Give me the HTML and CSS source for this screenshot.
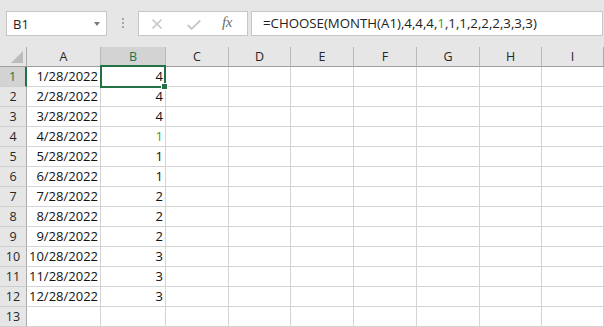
FILE: index.html
```html
<!DOCTYPE html>
<html>
<head>
<meta charset="utf-8">
<link rel="stylesheet" href="styles.css">
</head>
<body>
<div class="app">
  <div class="toolbar">
    <div class="namebox"><span class="nb-text">B1</span><span class="nb-arrow"></span></div>
    <div class="grip"><i></i><i></i><i></i></div>
    <div class="fxbox">
      <svg class="ico-x" width="12" height="10" viewBox="0 0 12 10"><path d="M1.5 0.5 L10.5 9.5 M10.5 0.5 L1.5 9.5" stroke="#c4c4c4" stroke-width="1.5" fill="none"/></svg>
      <svg class="ico-ok" width="14" height="10" viewBox="0 0 14 10"><path d="M0.8 5 L4.6 8.8 L13.2 0.6" stroke="#c4c4c4" stroke-width="1.8" fill="none"/></svg>
      <span class="fx">fx</span>
    </div>
    <div class="formula">=CHOOSE(MONTH(A1),4,4,4,<span class="g">1</span>,1,1,2,2,2,3,3,3)</div>
  </div>
  <div class="sheetwrap">
    <div class="sheet">
      <div class="corner"><span class="tri"></span></div>
      <div class="ch">A</div><div class="ch sel">B</div><div class="ch">C</div><div class="ch">D</div><div class="ch">E</div><div class="ch">F</div><div class="ch">G</div><div class="ch">H</div><div class="ch last">I</div>

      <div class="rh rsel">1</div><div class="c r">1/28/2022</div><div class="c r">4</div><div class="c"></div><div class="c"></div><div class="c"></div><div class="c"></div><div class="c"></div><div class="c"></div><div class="c"></div>
      <div class="rh">2</div><div class="c r">2/28/2022</div><div class="c r">4</div><div class="c"></div><div class="c"></div><div class="c"></div><div class="c"></div><div class="c"></div><div class="c"></div><div class="c"></div>
      <div class="rh">3</div><div class="c r">3/28/2022</div><div class="c r">4</div><div class="c"></div><div class="c"></div><div class="c"></div><div class="c"></div><div class="c"></div><div class="c"></div><div class="c"></div>
      <div class="rh">4</div><div class="c r">4/28/2022</div><div class="c r g">1</div><div class="c"></div><div class="c"></div><div class="c"></div><div class="c"></div><div class="c"></div><div class="c"></div><div class="c"></div>
      <div class="rh">5</div><div class="c r">5/28/2022</div><div class="c r">1</div><div class="c"></div><div class="c"></div><div class="c"></div><div class="c"></div><div class="c"></div><div class="c"></div><div class="c"></div>
      <div class="rh">6</div><div class="c r">6/28/2022</div><div class="c r">1</div><div class="c"></div><div class="c"></div><div class="c"></div><div class="c"></div><div class="c"></div><div class="c"></div><div class="c"></div>
      <div class="rh">7</div><div class="c r">7/28/2022</div><div class="c r">2</div><div class="c"></div><div class="c"></div><div class="c"></div><div class="c"></div><div class="c"></div><div class="c"></div><div class="c"></div>
      <div class="rh">8</div><div class="c r">8/28/2022</div><div class="c r">2</div><div class="c"></div><div class="c"></div><div class="c"></div><div class="c"></div><div class="c"></div><div class="c"></div><div class="c"></div>
      <div class="rh">9</div><div class="c r">9/28/2022</div><div class="c r">2</div><div class="c"></div><div class="c"></div><div class="c"></div><div class="c"></div><div class="c"></div><div class="c"></div><div class="c"></div>
      <div class="rh">10</div><div class="c r">10/28/2022</div><div class="c r">3</div><div class="c"></div><div class="c"></div><div class="c"></div><div class="c"></div><div class="c"></div><div class="c"></div><div class="c"></div>
      <div class="rh">11</div><div class="c r">11/28/2022</div><div class="c r">3</div><div class="c"></div><div class="c"></div><div class="c"></div><div class="c"></div><div class="c"></div><div class="c"></div><div class="c"></div>
      <div class="rh">12</div><div class="c r">12/28/2022</div><div class="c r">3</div><div class="c"></div><div class="c"></div><div class="c"></div><div class="c"></div><div class="c"></div><div class="c"></div><div class="c"></div>
      <div class="rh">13</div><div class="c"></div><div class="c"></div><div class="c"></div><div class="c"></div><div class="c"></div><div class="c"></div><div class="c"></div><div class="c"></div><div class="c"></div>
    </div>
    <div class="selbox"></div>
    <div class="handle"></div>
  </div>
</div>
</body>
</html>
```

FILE: styles.css
```css
* { box-sizing: border-box; }
html, body { margin: 0; padding: 0; background: #ffffff; }
body {
  width: 604px;
  height: 327px;
  overflow: hidden;
  font-family: "Open Sans", "Noto Sans", sans-serif;
  color: #1f1f1f;
}
.app { width: 604px; }

.toolbar {
  height: 47px;
  background: #e6e6e6;
  display: flex;
  align-items: flex-start;
  padding: 11px 1px 0 6px;
}
.namebox {
  width: 101px;
  height: 25px;
  background: #fff;
  border: 1px solid #c6c6c6;
  display: flex;
  align-items: center;
  justify-content: space-between;
  padding: 0 6px 0 6px;
  font-size: 13px;
  color: #222;
}
.nb-arrow {
  width: 0; height: 0;
  border-left: 3.5px solid transparent;
  border-right: 3.5px solid transparent;
  border-top: 4px solid #7b7b7b;
  margin-top: 1px;
}
.grip {
  width: 31px;
  height: 25px;
  display: flex;
  flex-direction: column;
  align-items: center;
  justify-content: center;
  gap: 2px;
  padding-bottom: 1px;
}
.grip i {
  display: block;
  width: 2px; height: 2px;
  background: #a6a6a6;
}
.fxbox {
  width: 110px;
  height: 25px;
  background: #fff;
  border: 1px solid #c6c6c6;
  display: flex;
  align-items: center;
  padding-left: 12px;
}
.ico-x { margin-top: 1px; }
.ico-ok { margin-left: 24px; margin-top: 2px; }
.fx {
  margin-left: 21px;
  font-family: "Liberation Serif", "DejaVu Serif", serif;
  font-style: italic;
  font-size: 15px;
  color: #6e6e6e;
  letter-spacing: -0.5px;
  margin-top: -2px;
}
.formula {
  margin-left: 3px;
  flex: 1;
  height: 25px;
  background: #fff;
  border: 1px solid #c6c6c6;
  padding-left: 11px;
  font-size: 13.25px;
  line-height: 23px;
  color: #222;
  white-space: nowrap;
}
.g { color: #2fa043; }

.sheetwrap { position: relative; }
.sheet {
  display: grid;
  grid-template-columns: 27px 74px 65px 63px 62px 63px 63px 63px 62px 62px;
  grid-auto-rows: 20px;
  font-size: 13px;
}
.corner {
  background: #e6e6e6;
  border-right: 1px solid #ababab;
  border-bottom: 1px solid #9e9e9e;
  position: relative;
}
.tri {
  position: absolute;
  left: 11px; top: 4px;
  width: 0; height: 0;
  border-left: 12px solid transparent;
  border-bottom: 12px solid #bcbcbc;
}
.ch {
  background: #e6e6e6;
  border-right: 1px solid #b9b9b9;
  border-bottom: 1px solid #9e9e9e;
  text-align: center;
  line-height: 19px;
  font-size: 12.5px;
  color: #262626;
}
.ch.last { border-right: 1px solid #ababab; }
.ch.sel { background: #d3d3d3; color: #217346; }
.rh {
  background: #e6e6e6;
  border-right: 1px solid #ababab;
  border-bottom: 1px solid #cfcfcf;
  text-align: center;
  line-height: 19px;
  font-size: 12.5px;
  color: #262626;
}
.rh.rsel {
  background: #d3d3d3;
  color: #217346;
  border-right: 2px solid #217346;
}
.c {
  border-right: 1px solid #d4d4d4;
  border-bottom: 1px solid #d4d4d4;
  line-height: 19px;
  padding: 0 2px;
  white-space: nowrap;
  color: #111;
}
.c.r { text-align: right; }
.c.g { color: #2fa043; }

.selbox {
  position: absolute;
  left: 100px; top: 18px;
  width: 66px; height: 23px;
  border: 2px solid #217346;
}
.handle {
  position: absolute;
  left: 161px; top: 36px;
  width: 7px; height: 7px;
  background: #217346;
  border: 1px solid #fff;
}
```
